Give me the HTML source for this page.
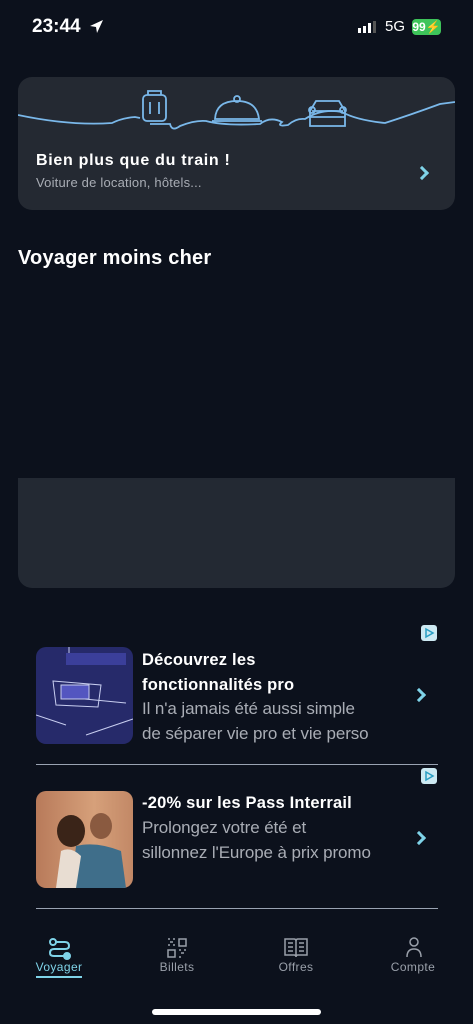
<!DOCTYPE html>
<html><head><meta charset="utf-8">
<style>
*{margin:0;padding:0;box-sizing:border-box}
body{width:473px;height:1024px;background:#0c111c;font-family:"Liberation Sans",sans-serif;color:#fff;position:relative;overflow:hidden}
.abs{position:absolute}
.t{font-weight:bold}
.sub{color:#a9adb5}
.chev{position:absolute;width:10px;height:10px;border-top:3px solid #7fd3e8;border-right:3px solid #7fd3e8;transform:rotate(45deg)}
.tab{position:absolute;top:960px;font-size:12px;color:#9aa0aa;text-align:center;width:80px;letter-spacing:0.4px}
</style></head><body>
<div class="abs t" style="left:32px;top:16px;font-size:19px">23:44</div>
<svg class="abs" style="left:89px;top:19px" width="15" height="15" viewBox="0 0 15 15"><path d="M14 1 L1 7 L7 8 L8 14 Z" fill="#fff"/></svg>
<svg class="abs" style="left:358px;top:21px" width="20" height="12"><rect x="0" y="7" width="3" height="5" fill="#fff"/><rect x="5" y="5" width="3" height="7" fill="#fff"/><rect x="10" y="2" width="3" height="10" fill="#fff"/><rect x="15" y="0" width="3" height="12" fill="#555"/></svg>
<div class="abs" style="left:385px;top:18px;font-size:15px">5G</div>
<div class="abs t" style="left:412px;top:19px;width:29px;height:16px;background:#3ec45a;border-radius:4px;font-size:12px;text-align:center;line-height:16px">99⚡</div>

<div class="abs" style="left:18px;top:77px;width:437px;height:133px;background:#242932;border-radius:14px;overflow:hidden">
<svg class="abs" style="left:0;top:0" width="437" height="60" viewBox="18 77 437 60" fill="none" stroke="#7ab8ea" stroke-width="1.8">
<path d="M18 115 Q70 126 112 123 Q122 118 135 117 L140 118 M150 124 L170 124 Q172 132 180 126 Q195 120 206 121 Q225 126 260 124 Q270 116 282 122 Q276 127 288 125 Q296 118 305 119 Q322 108 342 112 Q356 120 385 123 Q410 115 440 104 L455 102"/>
<rect x="143" y="95" width="23" height="26" rx="4"/><path d="M148 95 V91 H161 V95 M150 102 V114 M159 102 V114"/>
<path d="M215 119 Q216 101 237 101 Q257 101 259 119 Z M212 121 H262"/><circle cx="237" cy="99" r="3"/>
<path d="M310 111 L316 101 H339 L345 111 V126 H310 Z M310 117 H345 M312 111 H343"/><circle cx="312" cy="110" r="3"/><circle cx="343" cy="110" r="3"/>
</svg>
<div class="abs t" style="left:18px;top:75px;font-size:16px;letter-spacing:0.7px">Bien plus que du train !</div>
<div class="abs sub" style="left:18px;top:98px;font-size:13px;letter-spacing:0.2px">Voiture de location, hôtels...</div>
<div class="chev" style="left:399px;top:91px"></div>
</div>

<div class="abs t" style="left:18px;top:247px;font-size:20px;letter-spacing:0.2px">Voyager moins cher</div>
<div class="abs" style="left:18px;top:478px;width:437px;height:110px;background:#232933;border-radius:0 0 14px 14px"></div>

<div class="abs" style="left:421px;top:625px;width:16px;height:16px;background:#cde9f2;border-radius:3px"></div>
<svg class="abs" style="left:423px;top:627px" width="12" height="12"><path d="M3 2 V10 L10 6 Z" fill="none" stroke="#2a9ec2" stroke-width="1.5"/></svg>
<div class="abs" style="left:36px;top:647px;width:97px;height:97px;background:#262a6a;border-radius:10px;overflow:hidden">
<svg width="97" height="97" fill="none" stroke="#c8cef0" stroke-width="1"><path d="M33 0 V12 M17 34 L65 38 L62 60 L20 58 Z M28 50 L90 56 M0 68 L30 78 M50 88 L97 72"/><rect x="25" y="38" width="28" height="14" fill="#5356c0"/><rect x="30" y="6" width="60" height="12" fill="#3b3f9a" stroke="none"/></svg></div>
<div class="abs t" style="left:142px;top:648px;font-size:16.5px;line-height:25px;letter-spacing:0.2px">Découvrez les<br>fonctionnalités pro</div>
<div class="abs sub" style="left:142px;top:696px;font-size:17px;line-height:25px;letter-spacing:-0.1px">Il n'a jamais été aussi simple<br>de séparer vie pro et vie perso</div>
<div class="chev" style="left:414px;top:690px"></div>
<div class="abs" style="left:36px;top:764px;width:402px;height:1px;background:#9aa3b2"></div>

<div class="abs" style="left:421px;top:768px;width:16px;height:16px;background:#cde9f2;border-radius:3px"></div>
<svg class="abs" style="left:423px;top:770px" width="12" height="12"><path d="M3 2 V10 L10 6 Z" fill="none" stroke="#2a9ec2" stroke-width="1.5"/></svg>
<div class="abs" style="left:36px;top:791px;width:97px;height:97px;border-radius:10px;overflow:hidden;background:linear-gradient(90deg,#b87a5a,#d6a07a 60%,#c28866)">
<svg width="97" height="97"><ellipse cx="35" cy="40" rx="14" ry="16" fill="#3a2418"/><ellipse cx="65" cy="35" rx="11" ry="13" fill="#8a5a40"/><path d="M35 97 L40 55 Q60 50 85 60 L90 97 Z" fill="#3f6e8a"/><path d="M20 97 L25 60 Q35 55 45 65 L40 97Z" fill="#e8ddd2"/></svg></div>
<div class="abs t" style="left:142px;top:791px;font-size:16.5px;line-height:25px;letter-spacing:0.2px">-20% sur les Pass Interrail</div>
<div class="abs sub" style="left:142px;top:815px;font-size:17px;line-height:25px;letter-spacing:-0.1px">Prolongez votre été et<br>sillonnez l'Europe à prix promo</div>
<div class="chev" style="left:414px;top:833px"></div>
<div class="abs" style="left:36px;top:908px;width:402px;height:1px;background:#9aa3b2"></div>

<svg class="abs" style="left:48px;top:938px" width="24" height="22" fill="none" stroke="#7fd3e8" stroke-width="2"><circle cx="5" cy="4" r="3"/><path d="M8 4 H17 Q21 4 21 8 Q21 11 17 11 H6 Q2 11 2 15 Q2 18 6 18 H16"/><circle cx="19" cy="18" r="3" fill="#7fd3e8"/></svg>
<div class="tab" style="left:19px;color:#7fd3e8">Voyager</div>
<div class="abs" style="left:36px;top:976px;width:46px;height:2px;background:#7fd3e8"></div>
<svg class="abs" style="left:166px;top:937px" width="22" height="22" fill="none" stroke="#9aa0aa" stroke-width="1.5"><rect x="13" y="2" width="7" height="7"/><rect x="2" y="13" width="7" height="7"/><path d="M2 2h2M7 2h2M4 5h3M2 8h2M7 8h2M13 13h2M18 13h2M15 16h3M13 20h2"/></svg>
<div class="tab" style="left:137px">Billets</div>
<svg class="abs" style="left:284px;top:937px" width="24" height="22" fill="none" stroke="#9aa0aa" stroke-width="1.5"><path d="M1 2 H10 Q12 2 12 4 V20 Q12 18 10 18 H1Z M23 2 H14 Q12 2 12 4 V20 Q12 18 14 18 H23Z M4 6h5M4 10h5M4 14h5M15 6h5M15 10h5M15 14h5"/></svg>
<div class="tab" style="left:256px">Offres</div>
<svg class="abs" style="left:404px;top:937px" width="20" height="22" fill="none" stroke="#9aa0aa" stroke-width="1.5"><circle cx="10" cy="5" r="4"/><path d="M3 20 Q3 12 10 12 Q17 12 17 20"/></svg>
<div class="tab" style="left:373px">Compte</div>
<div class="abs" style="left:152px;top:1009px;width:169px;height:6px;background:#fff;border-radius:3px"></div>
</body></html>
